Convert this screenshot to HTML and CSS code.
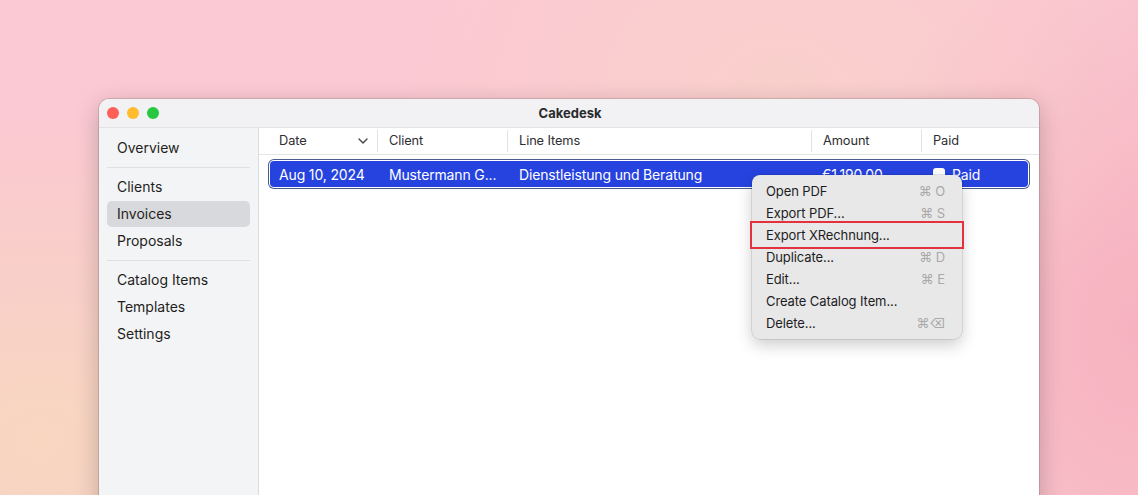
FILE: index.html
```html
<!DOCTYPE html>
<html>
<head>
<meta charset="utf-8">
<link rel="stylesheet" href="styles.css">
</head>
<body>
<div class="window">
  <div class="titlebar">
    <div class="lights">
      <span class="light red"></span>
      <span class="light yellow"></span>
      <span class="light green"></span>
    </div>
    <div class="title">Cakedesk</div>
  </div>
  <div class="body">
    <nav class="sidebar">
      <div class="nav-item">Overview</div>
      <div class="sep"></div>
      <div class="nav-item">Clients</div>
      <div class="nav-item active">Invoices</div>
      <div class="nav-item">Proposals</div>
      <div class="sep"></div>
      <div class="nav-item">Catalog Items</div>
      <div class="nav-item">Templates</div>
      <div class="nav-item">Settings</div>
    </nav>
    <main class="main">
      <div class="header">
        <div class="hcell first">Date
          <svg class="chev" width="10" height="6" viewBox="0 0 10 6"><path d="M1 1 L5 5 L9 1" fill="none" stroke="#444" stroke-width="1.4" stroke-linecap="round" stroke-linejoin="round"/></svg>
        </div>
        <div class="hcell">Client</div>
        <div class="hcell">Line Items</div>
        <div class="hcell">Amount</div>
        <div class="hcell">Paid</div>
      </div>
      <div class="row">
        <div class="cell first">Aug 10, 2024</div>
        <div class="cell">Mustermann G...</div>
        <div class="cell">Dienstleistung und Beratung</div>
        <div class="cell">€1.190,00</div>
        <div class="cell paid"><span class="check"></span>Paid</div>
      </div>
      <div class="menu">
        <div class="mitem"><span>Open PDF</span><span class="sc">⌘ O</span></div>
        <div class="mitem"><span>Export PDF...</span><span class="sc">⌘ S</span></div>
        <div class="mitem marked"><span>Export XRechnung...</span></div>
        <div class="mitem"><span>Duplicate...</span><span class="sc">⌘ D</span></div>
        <div class="mitem"><span>Edit...</span><span class="sc">⌘ E</span></div>
        <div class="mitem"><span>Create Catalog Item...</span></div>
        <div class="mitem"><span>Delete...</span><span class="sc">⌘⌫</span></div>
      </div>
    </main>
  </div>
</div>
</body>
</html>
```

FILE: styles.css
```css
html, body {
  margin: 0;
  padding: 0;
}
body {
  width: 1138px;
  height: 495px;
  overflow: hidden;
  font-family: Inter, "Noto Sans", "Liberation Sans", sans-serif;
  background:
    radial-gradient(ellipse 420px 320px at 40px 440px, rgba(248, 214, 192, 1), rgba(248, 214, 192, 0) 100%),
    radial-gradient(ellipse 380px 300px at 780px 90px, rgba(248, 212, 200, 0.6), rgba(248, 212, 200, 0) 100%),
    radial-gradient(ellipse 300px 420px at 1138px 330px, rgba(246, 176, 190, 0.95), rgba(246, 176, 190, 0) 100%),
    linear-gradient(180deg, #fbc9d3 0%, #f9c9cf 100%);
}
.window {
  margin: 99px 0 0 99px;
  width: 940px;
  height: 420px;
  border-radius: 10px 10px 0 0;
  background: #f3f4f6;
  box-shadow: 0 0 0 1px rgba(0, 0, 0, 0.12), 0 6px 24px rgba(0, 0, 0, 0.22);
  display: flex;
  flex-direction: column;
  overflow: hidden;
  color: #1d1d1f;
}
.titlebar {
  height: 28px;
  display: flex;
  align-items: center;
  background: #f2f2f4;
  border-bottom: 1px solid #e2e2e4;
}
.lights {
  display: flex;
  gap: 8px;
  padding-left: 8px;
}
.light {
  width: 12px;
  height: 12px;
  border-radius: 50%;
}
.red { background: #fe5f57; }
.yellow { background: #febc2e; }
.green { background: #28c840; }
.title {
  flex: 1;
  text-align: center;
  font-weight: 700;
  font-size: 13px;
  color: #2b2b2d;
  margin-right: 58px;
}
.body {
  flex: 1;
  display: flex;
}
.sidebar {
  width: 143px;
  padding: 7px 8px 0 8px;
  background: #f3f4f6;
  border-right: 1px solid #dcdcde;
}
.nav-item {
  height: 26px;
  line-height: 26px;
  margin-bottom: 1px;
  padding-left: 10px;
  font-size: 14px;
  border-radius: 5px;
  color: #1f1f21;
}
.nav-item.active {
  background: #d8d9dc;
}
.sep {
  height: 1px;
  background: #dfe0e2;
  margin: 6px 0 6px 0;
}
.main {
  flex: 1;
  background: #ffffff;
  padding: 0 9px;
  position: relative;
}
.header {
  display: grid;
  grid-template-columns: 109px 130px 304px 110px 1fr;
  height: 26px;
  align-items: center;
  border-bottom: 1px solid #e6e6e8;
  margin: 0 -9px;
  padding: 0 9px;
  font-size: 12.8px;
  letter-spacing: -0.1px;
  color: #2e2e30;
}
.hcell {
  height: 22px;
  line-height: 22px;
  padding-left: 11px;
  border-left: 1px solid #e2e2e4;
}
.hcell.first {
  border-left: none;
  display: flex;
  align-items: center;
  justify-content: space-between;
  padding-right: 9px;
}
.row {
  margin: 6px 2px 0 2px;
  height: 26px;
  background: #2643e0;
  border-radius: 4px;
  box-shadow: 0 0 0 1px #ffffff, 0 0 0 2px #4d5c8c;
  display: grid;
  grid-template-columns: 107px 130px 304px 110px 1fr;
  align-items: center;
  font-size: 14px;
  letter-spacing: -0.15px;
  color: #ffffff;
}
.cell {
  padding-left: 12px;
  white-space: nowrap;
}
.cell.first {
  padding-left: 9px;
}
.cell:nth-child(4) {
  padding-left: 11px;
}
.paid {
  display: flex;
  align-items: center;
}
.check {
  width: 12px;
  height: 12px;
  background: #ffffff;
  border-radius: 3px;
  margin-right: 7px;
}
.menu {
  position: absolute;
  left: 493px;
  top: 47px;
  width: 210px;
  padding: 5px 0;
  background: #e8e8e8;
  border-radius: 8px;
  box-shadow: 0 0 0 0.5px rgba(0, 0, 0, 0.18), 0 6px 16px rgba(0, 0, 0, 0.2);
  font-size: 13px;
  letter-spacing: -0.1px;
  color: #1d1d1f;
}
.mitem {
  height: 22px;
  display: flex;
  align-items: center;
  justify-content: space-between;
  padding: 0 17px 0 14px;
}
.sc {
  color: #a9a9ab;
  font-size: 13px;
}
.marked {
  outline: 2.5px solid #e3323e;
  outline-offset: 1px;
  margin: 0 1px;
  padding-left: 13px;
}
```
